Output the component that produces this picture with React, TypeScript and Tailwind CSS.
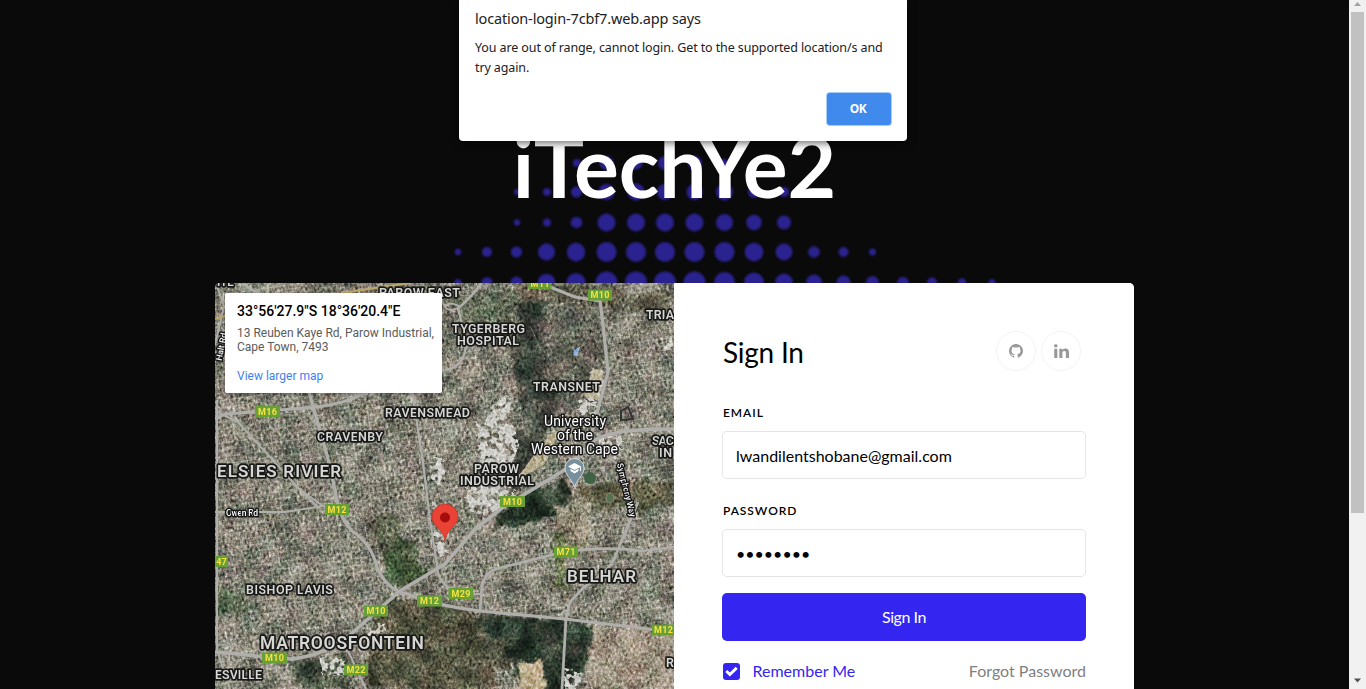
import React from "react";

type Dot = [number, number, number];

const dots: Dot[] = [
  [577, 163, 4], [606.5, 163, 7], [636, 163, 6.5], [665, 163, 7], [695, 163, 7], [724, 163, 4], [754, 163, 3],
  [517, 192, 3], [547, 192, 4], [576.5, 192, 5.5], [606.5, 192, 8], [636, 192, 8.5], [665, 192, 8], [694.5, 192, 8], [724.5, 192, 8.5], [754, 192, 6], [784, 192, 5],
  [517, 222.5, 3.2], [547, 222.5, 4], [576.5, 222.5, 5.8], [606.5, 222.5, 9], [636, 222.5, 9], [665, 222.5, 9], [694.5, 222.5, 9], [724.5, 222.5, 8.5], [754, 222.5, 7.8], [784, 222.5, 7],
  [458, 252, 3.2], [487, 252, 5], [516.5, 252, 5.6], [546.5, 252, 8.5], [576, 252, 9.2], [606.5, 252, 10], [636, 252, 10], [665, 252, 10], [694.5, 252, 10], [724.5, 252, 10], [754, 252, 9.3], [784, 252, 8.4], [814, 252, 5.8], [843.5, 252, 5], [872.5, 252, 3.6],
  [458, 282.5, 3.5], [487, 282.5, 5.5], [516.5, 282.5, 6], [546.5, 282.5, 8.8], [576, 282.5, 9.5], [606.5, 282.5, 11], [636, 282.5, 11], [665, 282.5, 11], [694.5, 282.5, 11], [724.5, 282.5, 10.5], [754, 282.5, 10], [784, 282.5, 9], [814, 282.5, 8], [843.5, 282.5, 7], [872.5, 282.5, 6.5], [903, 282.5, 5.8], [932, 282.5, 5], [962, 282.5, 4.2], [992, 282.5, 3.4],
];

const patches: [string, string][] = [
  ["M520 283L545 283 552 340 562 400 540 440 525 489 510 489 520 400 508 330Z", "#41443f"],
  ["M545 310L590 300 608 330 600 400 560 420 548 370Z", "#64635c"],
  ["M445 295L520 290 520 340 470 340Z", "#656a5c"],
  ["M508 283L600 283 640 295 674 292 674 310 600 310 520 300Z", "#676255"],
  ["M500 512L530 490 565 480 575 508 540 520 495 528Z", "#28352b"],
  ["M580 485L674 480 674 505 590 515Z", "#62604c"],
  ["M482 613L595 623 588 660 580 676 562 689 520 689 512 660 492 650Z", "#29342c"],
  ["M388 540L415 540 425 575 400 590 385 575Z", "#46573f"],
  ["M370 515L400 510 395 550 375 548Z", "#5f6151"],
  ["M385 600L440 600 482 613 500 689 370 689 365 635Z", "#575545"],
  ["M300 658L345 655 350 689 290 689Z", "#50574a"],
  ["M215 585L240 590 250 612 215 615Z", "#5f6a55"],
  ["M595 622L674 633 674 689 585 689 588 655Z", "#a19487"],
  ["M519 660L540 660 545 689 518 689Z", "#c4b499"],
  ["M478 640L505 638 508 668 450 672Z", "#5b5a4c"],
  ["M555 500L590 500 590 550 560 552Z", "#968d7d"],
  ["M552 533L563 533 566 585 554 583Z", "#65704d"],
];

const buildings = [
  "M493 400L510 397 510 420 519 440 514 460 490 455 478 442Z",
  "M478 425L505 436 515 470 490 480 478 460Z",
  "M593 367L603 370 598 403 583 397Z",
  "M580 399L601 404 596 417 578 412Z",
  "M598 438L621 434 621 450 600 452Z",
  "M661 342L674 338 674 355 664 354Z",
  "M466 487L500 483 516 490 508 505 482 517 469 510Z",
  "M366 632L384 623 387 632 372 640Z",
  "M322 658L345 661 344 676 321 674Z",
  "M433 530L445 535 444 560 438 555Z",
  "M432 502L445 510 443 520 434 517Z",
  "M429 463L443 458 446 474 434 484Z",
  "M565 668L582 672 580 689 564 689Z",
];

const roads: [string, number][] = [
  ["M215 420Q220 413 240 413L305 408Q345 405 366 392L442 350", 3],
  ["M217 412L238 422 300 490 318 507", 2],
  ["M309 392L327 455 335 490Q339 518 352 531Q371 543 377 567Q387 591 408 594Q427 604 480 611L565 619 674 632", 3.2],
  ["M412 390L424 470 430 520 437 565Q437 580 450 589", 2.2],
  ["M215 652Q240 654 266 657L290 659Q329 656 360 626L400 591 445 564 475 529 502 508 566 469 595 440Q615 428 674 429", 3.5],
  ["M540 283L575 297 600 301 603 325 608 372 597 413 590 440", 3.2],
  ["M217 400L217 650 230 689", 2],
  ["M215 512L285 512 323 506 337 508", 1.8],
  ["M323 506L295 486", 1.8],
  ["M480 611L482 585Q486 572 496 569L555 554Q600 545 642 551L674 547", 2.7],
  ["M462 594L480 594", 2],
  ["M638 502L617 552Q611 572 584 587L570 602 566 619 562 689", 2.8],
  ["M608 458Q620 463 622 475L632 500", 1.8],
  ["M347 649L357 670 366 689", 2.2],
  ["M243 283Q253 293 278 301L330 295", 3],
  ["M215 345L224 306 216 283", 2],
  ["M482 283Q465 304 458 308L466 340Q467 366 445 370", 2.5],
  ["M460 307Q450 313 445 307Q449 300 460 307", 1.8],
];

type Label = { t: string; x: number; y: number; w: number; s: number };
const labels: Label[] = [
  { t: "PAROW EAST", x: 379, y: 296.5, w: 81, s: 12.5 },
  { t: "TYGERBERG", x: 452, y: 333, w: 73, s: 12.5 },
  { t: "HOSPITAL", x: 457, y: 345, w: 62, s: 12.5 },
  { t: "TRIA", x: 646, y: 319, w: 28, s: 12.5 },
  { t: "TRANSNET", x: 533, y: 391, w: 67, s: 12.5 },
  { t: "RAVENSMEAD", x: 385, y: 417, w: 85, s: 12.5 },
  { t: "CRAVENBY", x: 317, y: 441, w: 66, s: 12.5 },
  { t: "ELSIES RIVIER", x: 217, y: 477, w: 124, s: 17 },
  { t: "PAROW", x: 474, y: 473, w: 45, s: 12.5 },
  { t: "INDUSTRIAL", x: 460, y: 485, w: 74, s: 12.5 },
  { t: "SAC", x: 652, y: 445, w: 22, s: 12.5 },
  { t: "IN", x: 659, y: 457, w: 13, s: 12.5 },
  { t: "BISHOP LAVIS", x: 246, y: 594, w: 87, s: 12.5 },
  { t: "BELHAR", x: 567, y: 581.5, w: 69, s: 17 },
  { t: "MATROOSFONTEIN", x: 260, y: 649, w: 164, s: 17.5 },
  { t: "ESVILLE", x: 215, y: 679, w: 47, s: 12.5 },
  { t: "R", x: 666, y: 667, w: 8, s: 12.5 },
];

const shields: [string, number, number, number][] = [
  ["M11", 540, 283.5, 23], ["M10", 600, 295, 24], ["M16", 267.5, 411.5, 25], ["M10", 512.5, 501.5, 25],
  ["M12", 337, 509.5, 24], ["47", 221.5, 561.5, 13], ["M71", 566, 552, 24], ["M29", 461, 593.5, 25],
  ["M12", 429.5, 601, 25], ["M10", 376, 611, 24], ["M12", 663.5, 630, 23], ["M10", 274.5, 658, 25], ["M22", 356, 670, 24],
];

function SatelliteMap() {
  return (
    <svg width="459" height="406" viewBox="215 283 459 406" className="block isolate" fontFamily="Roboto, sans-serif">
      <defs>
        <filter id="soft" x="-20%" y="-20%" width="140%" height="140%" colorInterpolationFilters="sRGB">
          <feGaussianBlur stdDeviation="1.5" result="b" />
          <feTurbulence type="fractalNoise" baseFrequency="0.06" numOctaves="3" seed="3" result="n" />
          <feDisplacementMap in="b" in2="n" scale="20" xChannelSelector="R" yChannelSelector="G" />
        </filter>
        <filter id="rough" x="-20%" y="-20%" width="140%" height="140%" colorInterpolationFilters="sRGB">
          <feTurbulence type="fractalNoise" baseFrequency="0.16" numOctaves="2" seed="6" result="n" />
          <feDisplacementMap in="SourceGraphic" in2="n" scale="12" result="s" />
          <feColorMatrix in="n" values="0 0 0 0 1  0 0 0 0 1  0 0 0 0 1  9 0 0 0 -3.7" result="m" />
          <feComposite in="s" in2="m" operator="in" />
        </filter>
        <filter id="grain" x="0" y="0" width="100%" height="100%" colorInterpolationFilters="sRGB">
          <feTurbulence type="fractalNoise" baseFrequency="0.36 0.3" numOctaves="3" seed="8" />
          <feColorMatrix values="0.76 0.36 0.36 0 -0.24  0.65 0.47 0.36 0 -0.24  0.65 0.36 0.45 0 -0.24  0 0 0 0 1" />
        </filter>
        <filter id="terrain" x="0" y="0" width="100%" height="100%" colorInterpolationFilters="sRGB">
          <feTurbulence type="fractalNoise" baseFrequency="0.05" numOctaves="4" seed="19" />
          <feColorMatrix values="1 .3 0 0 -0.15  0.8 0.5 0 0 -0.14  0.8 0.4 0.1 0 -0.16  0 0 0 0 1" />
        </filter>
        <pattern id="streets" width="9" height="7" patternUnits="userSpaceOnUse" patternTransform="rotate(-8)">
          <path d="M0 .5H9M.5 0V7" stroke="#b8b3aa" strokeOpacity=".5" fill="none" />
        </pattern>
      </defs>
      <rect x="215" y="283" width="459" height="406" fill="#7f7c74" />
      <rect x="215" y="283" width="459" height="406" fill="url(#streets)" />
      <g filter="url(#soft)">{patches.map(([d, c]) => <path key={d} d={d} fill={c} />)}</g>
      <rect x="215" y="283" width="459" height="406" filter="url(#terrain)" className="mix-blend-soft-light" />
      <g filter="url(#rough)" fill="#cfceca">{buildings.map((d) => <path key={d} d={d} />)}</g>
      <path d="M593 368L603 371 599 401 584 396Z" fill="#bcb59c" />
      <path d="M549 435L560 430 545 464 514 482Z" fill="#b7ad93" />
      <path d="M574 350L580 347 577 356 573 355Z" fill="#8eb2dc" />
      <path d="M556 310Q545 318 550 340M549 313Q562 297 588 305Q607 314 607 343" fill="none" stroke="#89847a" strokeWidth="1.5" opacity=".7" />
      <path d="M530 325L545 360M538 325L552 365M590 330L565 382" fill="none" stroke="#a49d91" strokeWidth=".8" opacity=".5" />
      <rect x="215" y="283" width="459" height="406" filter="url(#grain)" className="mix-blend-overlay" />
      <path d="M621 411L628 407 633 419 621 420Z" fill="none" stroke="#303433" strokeWidth="2" />
      <circle cx="590" cy="478" r="6" fill="#3f6145" />
      <ellipse cx="610" cy="498" rx="4" ry="5" fill="#587052" stroke="#8f9279" />
      <g fill="none" stroke="#b0afac" strokeLinejoin="round">{roads.map(([d, w]) => <path key={d} d={d} strokeWidth={w} />)}</g>
      <path d="M215 319L225 316M342 293L410 283" fill="none" stroke="#bda967" strokeWidth="2" />

      <g fill="#d7d7d4" stroke="#171817" strokeWidth="3.4" strokeLinejoin="round" paintOrder="stroke" fontWeight="600">
        {labels.map((l) => (
          <text key={l.t} x={l.x} y={l.y} fontSize={l.s} textLength={l.w}>{l.t}</text>
        ))}
        <text x="217" y="286" fontSize="11.5">ITE</text>
      </g>
      <g fill="#ffffff" stroke="#171817" strokeWidth="3" strokeLinejoin="round" paintOrder="stroke" fontSize="14">
        <text x="544" y="426" textLength="62">University</text>
        <text x="557" y="440" textLength="36">of the</text>
        <text x="531" y="454" textLength="87">Western Cape</text>
        <text x="226" y="516" fontSize="8.5" textLength="32" fontWeight="500">Owen Rd</text>
        <text transform="translate(221.5 361) rotate(-79)" fontSize="8.5" fontWeight="500">Halt Rd</text>
        <text transform="translate(617 464) rotate(76)" fontSize="8.5" fontWeight="500" textLength="55">Symphony Way</text>
      </g>
      {shields.map(([t, x, y, w]) => (
        <g key={t + x}>
          <rect x={x - w / 2} y={y - 5.5} width={w} height="11" fill="#689f38" />
          <text x={x} y={y + 3.3} textAnchor="middle" fontSize="9" fontWeight="700" fill="#f5e342" textLength={t.length === 3 ? 19 : 10.5}>{t}</text>
        </g>
      ))}
      <path d="M574.5 487C571 478 565 475 565 468A9.500 9.500 0 0 1 584 468C584 475 578 478 574.5 487Z" fill="#78909c" stroke="#eceff1" strokeWidth=".8" />
      <path d="M574.5 463L581 466.5V471H580V467.2L574.5 470 568 466.5ZM570.5 468.7L574.5 471 578.5 468.700V471L574.500 473.5 570.5 471Z" fill="#fff" />
      <path d="M445 541C443 528 432 526 432 517A13 13 0 0 1 458 517C458 526 447 528 445 541Z" fill="#ea4335" stroke="#b93229" strokeWidth=".7" />
      <circle cx="445" cy="517.500" r="5" fill="#a50e0e" />
    </svg>
  );
}

function GithubGlyph() {
  return (
    <svg width="14" height="14" viewBox="0 0 1536 1536" fill="#999">
      <path d="M768 0q209 0 385.500 103t279.500 279.500 103 385.500q0 251-146.500 451.500t-378.500 277.500q-27 5-40-7t-13-30q0-3 .5-76.500t.5-134.500q0-97-52-142 57-6 102.500-18t94-39 81-66.500 53-105 20.500-150.500q0-119-79-206 37-91-8-204-28-9-81 11t-92 44l-38 24q-93-26-192-26t-192 26q-16-11-42.500-27t-83.500-38.500-85-13.500q-45 113-8 204-79 87-79 206 0 85 20.500 150t52.500 105 80.500 67 94 39 102.500 18q-39 36-49 103-21 10-45 15t-57 5-65.500-21.500-55.500-62.500q-19-32-48.500-52t-49.500-24l-20-3q-21 0-29 4.500t-5 11.500 9 14 13 12l7 5q22 10 43.500 38t31.500 51l10 23q13 38 44 61.500t67 30 69.500 7 55.500-3.500l23-4q0 38 .5 88.500t.5 54.500q0 18-13 30t-40 7q-232-77-378.500-277.500t-146.500-451.500q0-209 103-385.500t279.500-279.500 385.500-103z" />
    </svg>
  );
}

function LinkedinGlyph() {
  return (
    <svg width="15" height="14" viewBox="0 0 448 448" fill="#999" preserveAspectRatio="none">
      <path d="M100 448H7V149h93ZM53 108C24 108 0 84 0 54a54 54 0 0 1 107 0c0 30-24 54-54 54ZM448 448h-93V302c0-35-1-79-48-79-49 0-56 38-56 77v148h-93V149h89v41h1c13-24 43-48 88-48 94 0 112 62 112 142Z" />
    </svg>
  );
}

function SocialButton({ label, children }: { label: string; children: React.ReactNode }) {
  return (
    <a href="#" aria-label={label} className="flex size-10 items-center justify-center rounded-full border border-black/5">
      {children}
    </a>
  );
}

function Field({ label, type, value }: { label: string; type: string; value: string }) {
  return (
    <label className="block">
      <span className="block h-[18px] pl-px text-xs leading-[18px] font-semibold tracking-[0.95px] text-black">{label}</span>
      <input
        type={type}
        defaultValue={value}
        className="mt-[9px] block h-12 w-full rounded-[5px] border border-black/10 bg-white px-[13px] text-base text-black outline-none"
      />
    </label>
  );
}

function SignInForm() {
  return (
    <form className="w-[460px] bg-white px-12 pt-12">
      <div className="flex h-14 justify-between">
        <h3 className="pt-0.5 pl-px text-[28px] leading-[38px] font-normal tracking-[-0.25px] text-black">Sign In</h3>
        <div className="flex gap-[5px] pr-[5px]">
          <SocialButton label="GitHub"><GithubGlyph /></SocialButton>
          <SocialButton label="LinkedIn"><LinkedinGlyph /></SocialButton>
        </div>
      </div>
      <div className="flex flex-col gap-[23px] pt-[17px]">
        <Field label="EMAIL" type="email" value="lwandilentshobane@gmail.com" />
        <Field label="PASSWORD" type="password" value="password" />
      </div>
      <button type="button" className="mt-4 block h-12 w-full rounded-[5px] bg-[#3426f0] text-base tracking-[-0.45px] text-white">Sign In</button>
      <div className="mt-[18px] flex items-center justify-between text-base">
        <div className="flex items-center gap-[13px] pl-[0.5px] text-[#3426f0]">
          <span className="flex size-[17px] items-center justify-center rounded-[3px] bg-[#3426f0]">
            <svg width="13" height="11" viewBox="0 0 13 11" fill="none" stroke="#fff" strokeWidth="2.900"><path d="M1.300 5L4.900 8.500 11.700 1.900" /></svg>
          </span>
          <span>Remember Me</span>
        </div>
        <a href="#" className="text-[#808080]">Forgot Password</a>
      </div>
    </form>
  );
}

function AlertDialog() {
  return (
    <div className="absolute top-0 left-[459px] flex h-[141px] w-[448px] flex-col rounded-b-[4px] bg-white px-4 pt-2 font-['Noto_Sans',sans-serif] text-[#202124] shadow-[0_2px_8px_rgba(0,0,0,0.6)]">
      <h2 className="text-[14.5px] leading-5 tracking-[-0.15px] whitespace-nowrap">location-login-7cbf7.web.app says</h2>
      <p className="mt-2.5 text-[12.5px] leading-5 tracking-[-0.11px] whitespace-nowrap">
        You are out of range, cannot login. Get to the supported location/s and<br />try again.
      </p>
      <button type="button" className="mt-[15px] h-8 w-16 self-end rounded-[3px] bg-[#4089ed] pr-0.5 text-xs font-bold tracking-[-0.4px] text-white ring-1 ring-[#a9cbfa]">OK</button>
    </div>
  );
}

function ScrollBar() {
  return (
    <div className="flex w-[17px] flex-col items-center bg-[#f1f1f1]">
      <svg width="17" height="12" viewBox="0 0 17 12" className="shrink-0"><path d="M5 6L8.500 2 12 6Z" fill="#a3a3a3" /></svg>
      <div className="h-[501px] w-[13px] bg-[#c1c1c1]" />
      <svg width="17" height="12" viewBox="0 0 17 12" className="mt-auto shrink-0"><path d="M5 1.500L8.500 5.500 12 1.500Z" fill="#505050" /></svg>
    </div>
  );
}

export default function App() {
  return (
    <div className="relative flex h-[689px] w-[1366px] overflow-hidden bg-[#0a0a0a] font-[Lato,sans-serif]">
      <main className="relative flex flex-1 flex-col items-center">
        <svg width="1349" height="300" className="absolute top-0 left-0" fill="#2a218e">
          <defs><filter id="dotBlur"><feGaussianBlur stdDeviation="0.8" /></filter></defs>
          <g filter="url(#dotBlur)">{dots.map(([x, y, r]) => <circle key={x + "-" + y} cx={x} cy={y} r={r} />)}</g>
        </svg>
        <h1 className="relative mt-[116px] h-[167px] text-[84px] leading-[100px] font-bold whitespace-nowrap text-white">iTechYe2</h1>
        <section className="relative flex h-[406px] w-[919px] overflow-hidden rounded-t-[5px] bg-white">
          <div className="relative w-[459px] shrink-0">
            <SatelliteMap />
            <div className="absolute top-2.5 left-2.5 h-[100px] w-[217px] rounded-[2px] bg-white px-3 pt-[9px] font-[Roboto,sans-serif] text-xs whitespace-nowrap shadow-[0_1px_4px_rgba(0,0,0,0.3)]">
              <div className="text-sm leading-[18px] font-medium text-black">33°56'27.9"S 18°36'20.4"E</div>
              <div className="mt-[6px] leading-[14px] text-[#5b5b5b]">13 Reuben Kaye Rd, Parow Industrial,<br />Cape Town, 7493</div>
              <a href="#" className="mt-[15px] block leading-[14px] text-[#427fed]">View larger map</a>
            </div>
          </div>
          <SignInForm />
        </section>
      </main>
      <ScrollBar />
      <AlertDialog />
    </div>
  );
}
